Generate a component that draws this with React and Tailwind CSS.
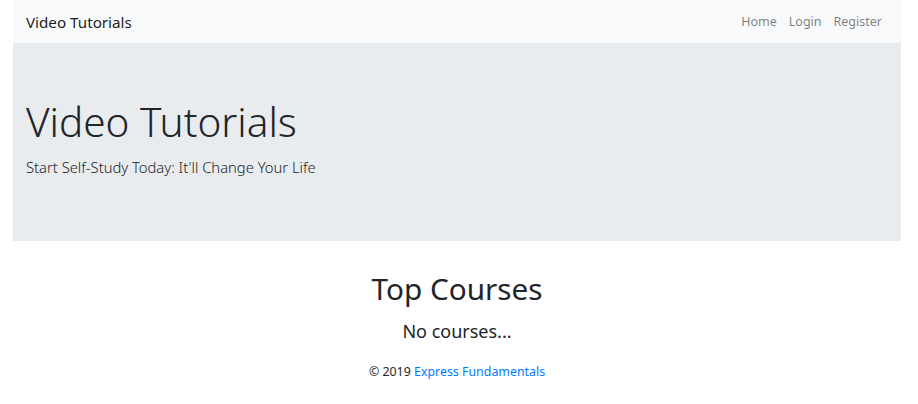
const font = { fontFamily: '"Noto Sans", "Open Sans", sans-serif' };

const NavLink = ({ label }) => (
  <a href="#" className="px-[6px] text-[12.5px] text-black/50">
    {label}
  </a>
);

export default function App() {
  return (
    <div className="min-h-[404px] bg-white text-[#212529]" style={font}>
      <div className="ml-[13px] w-[888px]">
        <nav className="flex h-[43px] items-center justify-between bg-[#f8f9fa] px-[13px] pt-[1px]">
          <a href="#" className="text-[15.2px] text-black/90">
            Video Tutorials
          </a>
          <div className="flex">
            <NavLink label="Home" />
            <NavLink label="Login" />
            <NavLink label="Register" />
          </div>
        </nav>

        <div className="h-[198px] bg-[#e9ecef] px-[13px] pt-[53px]">
          <h1 className="text-[40.5px] font-light leading-[52px]">Video Tutorials</h1>
          <p className="mt-[8px] text-[14.75px] font-light text-[#212529]">
            Start Self-Study Today: It'll Change Your Life
          </p>
        </div>

        <div className="flex flex-col items-center pt-[27px]">
          <h2 className="text-[29.7px] leading-[42px]">Top Courses</h2>
          <h4 className="mt-[9px] text-[18px] leading-[24px]">No courses...</h4>
          <p className="mt-[20px] text-[12.4px]">
            © 2019{" "}
            <a href="#" className="text-[#007bff]">
              Express Fundamentals
            </a>
          </p>
        </div>
      </div>
    </div>
  );
}
